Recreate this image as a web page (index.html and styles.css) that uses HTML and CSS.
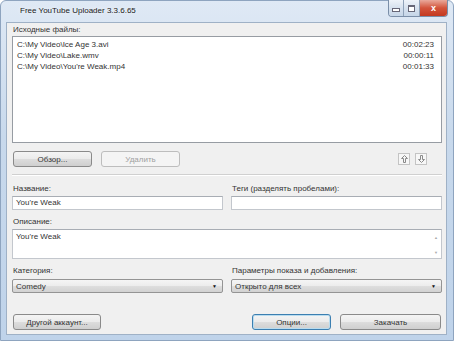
FILE: index.html
```html
<!DOCTYPE html>
<html lang="ru">
<head>
  <meta charset="UTF-8" />
  <title>Free YouTube Uploader 3.3.6.65</title>
  <link rel="stylesheet" href="styles.css">
</head>
<body>
  <div class="window">
    <div class="titlebar">
      <span class="title">Free YouTube Uploader 3.3.6.65</span>
      <div class="controls">
        <div class="ctl min"><span></span></div>
        <div class="ctl max"><span></span></div>
        <div class="ctl close">x</div>
      </div>
    </div>

    <div class="client">
      <div class="label">Исходные файлы:</div>
      <div class="listbox">
        <div class="row"><span>C:\My Video\Ice Age 3.avi</span><span>00:02:23</span></div>
        <div class="row"><span>C:\My Video\Lake.wmv</span><span>00:00:11</span></div>
        <div class="row"><span>C:\My Video\You're Weak.mp4</span><span>00:01:33</span></div>
      </div>

      <div class="toolbar">
        <button class="btn">Обзор...</button>
        <button class="btn" disabled>Удалить</button>
        <div class="arrows">
          <button class="arrow">
            <svg width="7" height="8" viewBox="0 0 7 8"><path d="M3.5 0.5 L6.5 3.5 H4.5 V7.5 H2.5 V3.5 H0.5 Z" fill="none" stroke="#8a8a8a" stroke-width="1"/></svg>
          </button>
          <button class="arrow">
            <svg width="7" height="8" viewBox="0 0 7 8"><path d="M3.5 7.5 L6.5 4.5 H4.5 V0.5 H2.5 V4.5 H0.5 Z" fill="none" stroke="#8a8a8a" stroke-width="1"/></svg>
          </button>
        </div>
      </div>

      <div class="separator"></div>

      <div class="cols first">
        <div class="field">
          <div class="label">Название:</div>
          <div class="input">You're Weak</div>
        </div>
        <div class="field">
          <div class="label">Теги (разделять пробелами):</div>
          <div class="input"></div>
        </div>
      </div>

      <div class="field desc">
        <div class="label">Описание:</div>
        <div class="textarea">
          <div class="text">You're Weak</div>
          <div class="scroll">
            <span>&#9650;</span>
            <span>&#9660;</span>
          </div>
        </div>
      </div>

      <div class="cols combos">
        <div class="field">
          <div class="label">Категория:</div>
          <div class="combo"><span>Comedy</span><span class="drop">&#9660;</span></div>
        </div>
        <div class="field">
          <div class="label">Параметры показа и добавления:</div>
          <div class="combo"><span>Открыто для всех</span><span class="drop">&#9660;</span></div>
        </div>
      </div>

      <div class="footer">
        <button class="btn wide">Другой аккаунт...</button>
        <div class="spacer"></div>
        <button class="btn focus">Опции...</button>
        <button class="btn big">Закачать</button>
      </div>
    </div>
  </div>
</body>
</html>
```

FILE: styles.css
```css
body {
  margin: 0;
  background: #fff;
  font-family: 'Liberation Sans', Arial, sans-serif;
  font-size: 8px;
  color: #333;
}

.window {
  width: 454px;
  height: 341px;
  box-sizing: border-box;
  border: 1px solid #8ea4bf;
  border-radius: 6px 6px 0 0;
  background: linear-gradient(#dfe9f5, #c8d9ec 40%, #bfd3ea);
  padding: 0 6px 5px 5px;
  display: flex;
  flex-direction: column;
}

.titlebar {
  height: 21px;
  display: flex;
  justify-content: space-between;
  align-items: flex-start;
}

.title {
  font-size: 8px;
  color: #1a1a1a;
  margin: 5px 0 0 14px;
  text-shadow: 0 0 4px #fff;
}

.controls {
  display: flex;
  margin-right: -1px;
  margin-top: -1px;
  border: 1px solid #7a8ea8;
  border-top: none;
  border-radius: 0 0 4px 4px;
  overflow: hidden;
}

.ctl {
  height: 16px;
  box-sizing: border-box;
  display: flex;
  align-items: center;
  justify-content: center;
  background: linear-gradient(#eef3f9, #d6e1ee 50%, #c6d6e8);
}

.ctl.min { width: 15px; border-right: 1px solid #8fa2b9; }
.ctl.min span { width: 6px; height: 2px; border: 1px solid #667; background: #fff; margin-top: 4px; }
.ctl.max { width: 16px; border-right: 1px solid #8fa2b9; }
.ctl.max span { width: 5px; height: 4px; border: 1px solid #667; border-top-width: 2px; background: #fff; }
.ctl.close {
  width: 27px;
  background: linear-gradient(#e9a99b, #d3543b 50%, #c3391f);
  color: #fff;
  font-size: 9px;
  font-weight: bold;
}

.client {
  flex: 1;
  background: #f0f0f0;
  border: 1px solid #9fb1c6;
  padding: 1px 4px 0 5px;
  display: flex;
  flex-direction: column;
}

.label {
  height: 12px;
  line-height: 12px;
  padding-left: 1px;
}

.listbox {
  height: 107px;
  box-sizing: border-box;
  background: #fff;
  border: 1px solid #979ca3;
  padding: 2px 7px 0 4px;
}

.row {
  display: flex;
  justify-content: space-between;
  line-height: 11px;
  height: 11px;
}

.toolbar {
  margin-top: 8px;
  display: flex;
  gap: 8px;
  align-items: flex-start;
}

.btn {
  height: 16px;
  width: 79px;
  box-sizing: border-box;
  border: 1px solid #8a8a8a;
  border-radius: 3px;
  background: linear-gradient(#f4f4f4, #ebebeb 50%, #dddddd 51%, #cfcfcf);
  font-family: inherit;
  font-size: 8px;
  color: #333;
  padding: 0;
  margin-left: 1px;
}

.btn:disabled {
  background: #f4f4f4;
  border-color: #bdbdbd;
  color: #a0a0a0;
}

.arrows {
  margin-left: auto;
  margin-right: 15px;
  margin-top: 2px;
  display: flex;
  gap: 5px;
}

.arrow {
  width: 12px;
  height: 12px;
  padding: 0;
  box-sizing: border-box;
  border: 1px solid #c4c4c4;
  background: #f7f7f7;
  display: flex;
  align-items: center;
  justify-content: center;
}

.separator {
  margin-top: 7px;
  height: 1px;
  background: #d0d0d0;
  border-bottom: 1px solid #fff;
}

.cols {
  display: grid;
  grid-template-columns: 1fr 1fr;
  gap: 8px;
}

.cols.first { margin-top: 7px; }

.field .label { margin-bottom: 1px; }

.input {
  height: 14px;
  box-sizing: border-box;
  background: #fff;
  border: 1px solid #c3c7cd;
  border-top-color: #a8adb4;
  line-height: 12px;
  padding-left: 3px;
}

.desc { margin-top: 6px; }

.textarea {
  height: 30px;
  box-sizing: border-box;
  background: #fff;
  border: 1px solid #c3c7cd;
  border-top-color: #a8adb4;
  display: flex;
}

.textarea .text {
  flex: 1;
  padding: 1px 3px;
  line-height: 11px;
}

.scroll {
  width: 10px;
  display: flex;
  flex-direction: column;
  justify-content: space-between;
  align-items: center;
  font-size: 4px;
  color: #aaa;
  padding: 5px 0 3px;
}

.combos { margin-top: 6px; }

.combos .label { margin-bottom: 2px; }

.combo {
  height: 14px;
  box-sizing: border-box;
  border: 1px solid #949494;
  border-radius: 2px;
  background: linear-gradient(#f5f5f5, #ececec 50%, #dedede 51%, #d2d2d2);
  display: flex;
  justify-content: space-between;
  align-items: center;
  padding: 0 5px 0 3px;
}

.drop {
  font-size: 5px;
  color: #111;
}

.footer {
  margin-top: 21px;
  display: flex;
  align-items: flex-start;
}

.btn.wide { width: 88px; }

.spacer { flex: 1; }

.btn.focus {
  border-color: #3c7fb1;
  box-shadow: inset 0 0 0 1px #b9dcef;
}

.btn.big {
  width: 101px;
  margin-left: 9px;
  margin-right: 1px;
}
```
